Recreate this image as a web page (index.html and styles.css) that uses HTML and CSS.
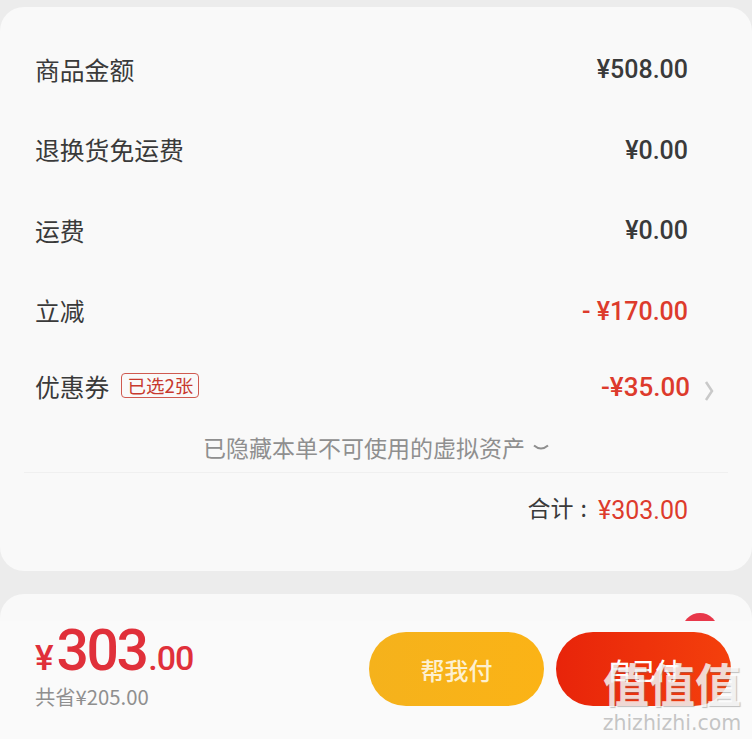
FILE: index.html
```html
<!DOCTYPE html>
<html lang="zh-CN">
<head>
  <meta charset="UTF-8" />
  <title>订单金额</title>
  <link rel="stylesheet" href="styles.css">
</head>
<body>
  <div class="page">
    <div class="card">
      <div class="row"><span class="label">商品金额</span><span class="amount">¥508.00</span></div>
      <div class="row"><span class="label">退换货免运费</span><span class="amount">¥0.00</span></div>
      <div class="row"><span class="label">运费</span><span class="amount">¥0.00</span></div>
      <div class="row"><span class="label">立减</span><span class="amount red">- ¥170.00</span></div>
      <div class="row coupon">
        <span class="label">优惠券<span class="tag">已选2张</span></span>
        <span class="amount amount-coupon red">-¥35.00</span>
        <svg class="arrow" width="10" height="20" viewBox="0 0 10 20"><path d="M2 1l6 9-6 9" fill="none" stroke="#c9c9c9" stroke-width="2.500"/></svg>
      </div>
      <div class="hidden-note">已隐藏本单不可使用的虚拟资产
        <svg width="16" height="8" viewBox="0 0 16 8"><path d="M1 1.500q7 6 14 0" fill="none" stroke="#8f8f8f" stroke-width="2"/></svg>
      </div>
      <div class="total"><span class="total-label">合计<span class="colon">:</span></span><span class="total-num">¥303.00</span></div>
    </div>

    <div class="paybar">
      <div class="badge"></div>
      <div class="paybar-inner">
        <div class="price">
          <div class="price-main"><span class="yen">¥</span><span class="big">303</span><span class="cents">.00</span></div>
          <div class="saved">共省¥205.00</div>
        </div>
        <div class="btns">
          <div class="btn btn-help">帮我付</div>
          <div class="btn btn-self">自己付</div>
        </div>
      </div>
    </div>
  </div>

  <div class="watermark">
    <div class="wm-big">值值值</div>
    <div class="wm-small">zhizhizhi.com</div>
  </div>
</body>
</html>
```

FILE: styles.css
```css
* { box-sizing: border-box; }

body {
  margin: 0;
  height: 739px;
  overflow: hidden;
  background: #ececec;
  font-family: "Noto Sans CJK SC", "Noto Sans", sans-serif;
  color: #3a3a3a;
}

.page {
  padding-top: 7px;
  display: flex;
  flex-direction: column;
  gap: 23px;
}

.card {
  height: 564px;
  background: #f9f9f9;
  border-radius: 24px;
  padding-top: 23px;
}

.row {
  height: 80.5px;
  padding: 0 64px 0 35px;
  display: flex;
  justify-content: space-between;
  align-items: center;
}

.label {
  font-size: 24.8px;
  line-height: 40px;
  padding-bottom: 3px;
  display: flex;
  align-items: center;
}

.amount {
  font-family: Roboto, sans-serif;
  font-weight: 500;
  font-size: 25px;
  line-height: 40px;
}

.amount-coupon { font-size: 26px; }

.red { color: #dd3b2c; }

.coupon {
  height: 70px;
  padding-right: 62px;
  position: relative;
}

.tag {
  margin-left: 12px;
  height: 25px;
  padding: 0 5px;
  border: 1px solid #cf5a50;
  border-radius: 4px;
  font-size: 18.500px;
  line-height: 23px;
  color: #c8392e;
}

.arrow {
  position: absolute;
  right: 38px;
  top: 29px;
}

.hidden-note {
  height: 51px;
  border-bottom: 1px solid #f0f0f0;
  margin: 0 24px;
  padding-top: 8px;
  font-size: 23px;
  line-height: 34px;
  color: #8f8f8f;
  display: flex;
  justify-content: center;
  gap: 8px;
  align-items: flex-start;
}

.hidden-note svg { margin-top: 14px; }

.total {
  padding: 16px 64px 0 0;
  display: flex;
  justify-content: flex-end;
  align-items: center;
  gap: 11px;
  font-size: 23px;
  line-height: 36px;
}

.total-label { padding-bottom: 5px; }

.colon { margin-left: 7px; }

.total-num {
  font-family: Roboto, sans-serif;
  font-size: 25px;
  padding-top: 2px;
  color: #dd3b2c;
}

.paybar {
  position: relative;
  height: 145px;
  background: #f9f9f9;
  border-radius: 24px 24px 0 0;
  padding-top: 27px;
  overflow: hidden;
}

.badge {
  position: absolute;
  right: 34px;
  top: 19px;
  width: 36px;
  height: 36px;
  border-radius: 50%;
  background: #e8384a;
}

.paybar-inner {
  position: relative;
  height: 118px;
  background: #fafafa;
  padding: 2px 21px 0 35px;
  display: flex;
  justify-content: space-between;
}

.price-main {
  display: flex;
  align-items: baseline;
  height: 56px;
  font-family: Roboto, sans-serif;
  font-weight: 500;
  color: #e0303a;
  line-height: 56px;
}

.yen { font-size: 35px; margin-right: 3px; }
.big { font-size: 57px; letter-spacing: -2.500px; margin-right: 2px; }
.cents { font-size: 34px; letter-spacing: -1px; }

.saved {
  margin-top: 3px;
  font-size: 20.300px;
  line-height: 28px;
  color: #8f8f8f;
}

.btns {
  display: flex;
  gap: 12px;
  margin-top: 9px;
}

.btn {
  width: 175px;
  height: 74px;
  border-radius: 37px;
  color: #fff;
  font-size: 24px;
  font-weight: 500;
  display: flex;
  align-items: center;
  justify-content: center;
}

.btn-help { background: linear-gradient(90deg, #f5b21c, #fbb316); color: #fdf0d0; }
.btn-self { background: linear-gradient(90deg, #e8240a, #f4400c); }

.watermark {
  position: absolute;
  left: 602px;
  top: 654px;
  width: 140px;
  text-align: center;
  color: rgba(255, 255, 255, 0.78);
}

.wm-big {
  font-size: 46px;
  font-weight: 700;
  line-height: 56px;
  white-space: nowrap;
  text-shadow: 1px 1px 1px rgba(120, 120, 120, 0.45);
}

.wm-small {
  font-family: "DejaVu Sans", sans-serif;
  font-size: 20.500px;
  line-height: 22px;
  margin-top: 2px;
  white-space: nowrap;
  color: rgba(190, 190, 190, 0.9);
}
```
